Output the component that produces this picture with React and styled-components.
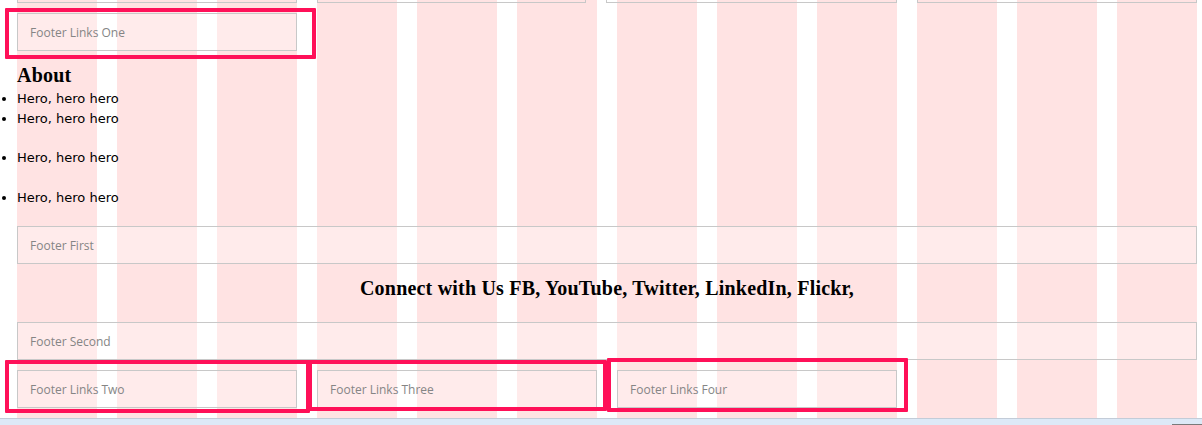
import styled, { createGlobalStyle } from 'styled-components';
import React from "react";

const GlobalStyle = createGlobalStyle`
    html, body {
        margin: 0;
        padding: 0;
        background: #fff;
    }
`

const Page = styled.div`
    display: flex;
    flex-direction: column;
    width: 1202px;
    height: 425px;
    overflow: hidden;
`

const Container = styled.div`
    background-image: repeating-linear-gradient(to right, #ffe3e3 0 80px, transparent 80px 100px);
    display: flex;
    flex-direction: column;
    margin-left: 17px;
    padding-bottom: 10px;
    width: 1180px;
`

const TopRow = styled.div`
    display: flex;
    gap: 20px;
`

const Stub = styled.div`
    border: 1px solid #c8c8c8;
    border-top: none;
    height: 2px;
    width: ${p => p.$w}px;
`

const Row = styled.div`
    display: grid;
    gap: 20px;
    grid-template-columns: repeat(12, 80px);
    margin-top: ${p => p.$top || 0}px;
`

const Cell = styled.div`
    align-items: center;
    background-color: rgba(255,255,255,.3);
    border: 1px solid #c8c8c8;
    box-sizing: border-box;
    color: #858585;
    display: flex;
    font-family: "Open Sans", "Liberation Sans", sans-serif;
    font-size: 12px;
    grid-column: span ${p => p.$span || 3};
    height: 38px;
    padding-left: 12px;
    position: relative;
`

const Mark = styled.span`
    border: 4px solid #ff1058;
    border-radius: 1px;
    bottom: ${p => p.$b}px;
    left: ${p => p.$l}px;
    pointer-events: none;
    position: absolute;
    right: ${p => p.$r}px;
    top: ${p => p.$t}px;
`

const Heading = styled.h3`
    color: #000;
    font-family: "Liberation Serif", "Times New Roman", serif;
    font-size: 20px;
    font-weight: 700;
    letter-spacing: 0.2px;
    line-height: 22px;
    margin: ${p => p.$top}px 0 0;
    text-align: ${p => p.$center ? 'center' : 'left'};
`

const List = styled.ul`
    font-family: "DejaVu Sans", Verdana, sans-serif;
    font-size: 13px;
    line-height: 19.5px;
    list-style: disc outside;
    margin: 3px 0 0;
    padding: 0;
`

const Item = styled.li`
    margin-top: ${p => p.$gap || 0}px;
`

const StatusBar = styled.div`
    align-items: flex-start;
    background-color: #dde9f7;
    border-top: 1px solid #c3ccd8;
    display: flex;
    flex: 1;
    justify-content: flex-end;
`

const Grip = styled.div`
    background-color: #e4e4e4;
    border: 1px solid #7a7a7a;
    height: 10px;
    margin-top: 5px;
    width: 28px;
`

function App(){
    return(
    <>
        <GlobalStyle />
        <Page>
            <Container>
                <TopRow>
                    <Stub $w={280} />
                    <Stub $w={269} />
                    <Stub $w={291} />
                    <Stub $w={280} />
                </TopRow>
                <Row $top={10}>
                    <Cell>
                        Footer Links One
                        <Mark $l={-13} $r={-20} $t={-6} $b={-9} />
                    </Cell>
                </Row>
                <Heading $top={13}>About</Heading>
                <List>
                    <Item>Hero, hero hero</Item>
                    <Item>Hero, hero hero</Item>
                    <Item $gap={20}>Hero, hero hero</Item>
                    <Item $gap={20}>Hero, hero hero</Item>
                </List>
                <Row $top={19}>
                    <Cell $span={12}>Footer First</Cell>
                </Row>
                <Heading $top={13} $center>Connect with Us FB, YouTube, Twitter, LinkedIn, Flickr,</Heading>
                <Row $top={23}>
                    <Cell $span={12}>Footer Second</Cell>
                </Row>
                <Row $top={10}>
                    <Cell>
                        Footer Links Two
                        <Mark $l={-13} $r={-14} $t={-11} $b={-6} />
                    </Cell>
                    <Cell>
                        Footer Links Three
                        <Mark $l={-10} $r={-11} $t={-11} $b={-4} />
                    </Cell>
                    <Cell>
                        Footer Links Four
                        <Mark $l={-11} $r={-12} $t={-13} $b={-5} />
                    </Cell>
                </Row>
            </Container>
            <StatusBar>
                <Grip />
            </StatusBar>
        </Page>
    </>
    )
}

export default App;
